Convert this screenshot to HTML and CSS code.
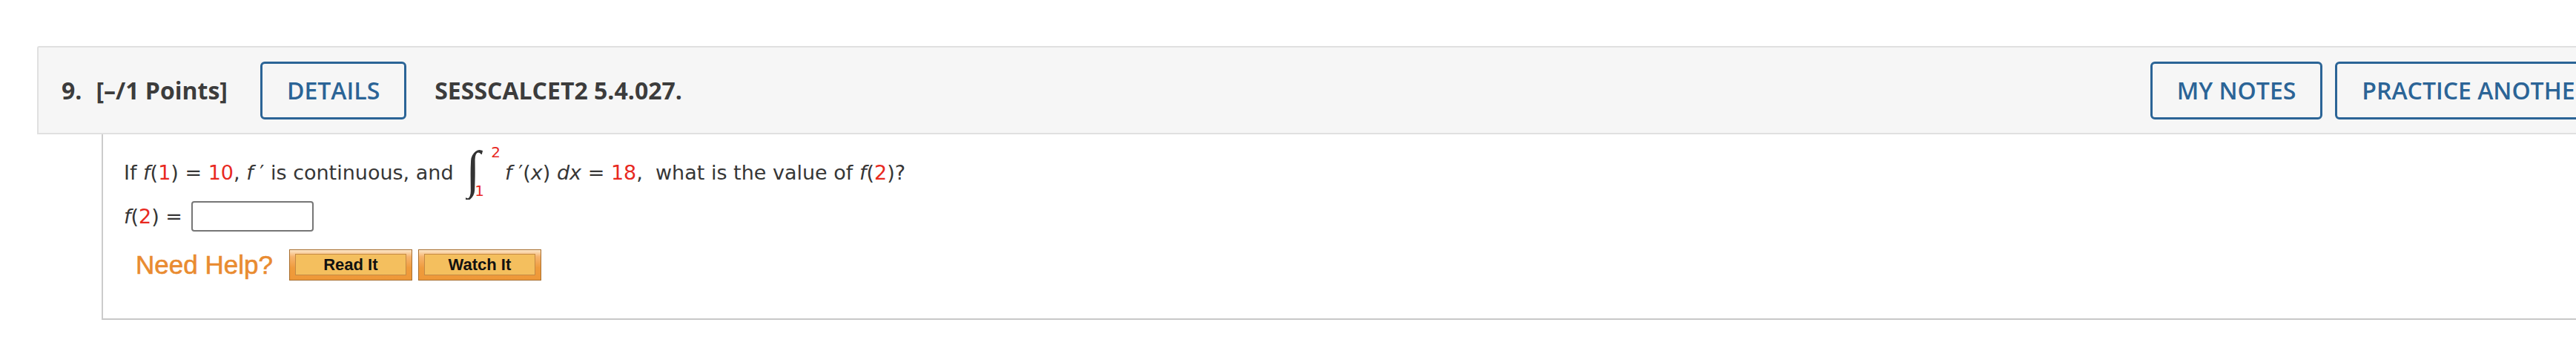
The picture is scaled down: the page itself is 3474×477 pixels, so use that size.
FILE: index.html
```html
<!DOCTYPE html>
<html lang="en">
<head>
<meta charset="utf-8">
<title>Question 9</title>
<link rel="stylesheet" href="styles.css">
</head>
<body>
<div class="page">
  <div class="question">
    <div class="q-header">
      <div class="q-left">
        <span class="q-num">9.</span>
        <span class="q-points">[–/1 Points]</span>
        <button class="btn-outline btn-details">DETAILS</button>
        <span class="q-code">SESSCALCET2 5.4.027.</span>
      </div>
      <div class="q-right">
        <button class="btn-outline">MY NOTES</button>
        <button class="btn-outline">PRACTICE ANOTHER</button>
      </div>
    </div>
    <div class="q-body">
      <p class="line1">If <i>f</i>(<span class="red">1</span>) = <span class="red">10</span>, <i>f</i> ′ is continuous, and <span class="int"><span class="int-in"><span class="int-sign">∫</span><span class="red lim-up">2</span><span class="red lim-lo">1</span></span></span><i>f</i> ′(<i>x</i>) <i>dx</i> = <span class="red">18</span>,&nbsp; what is the value of <i>f</i>(<span class="red">2</span>)?</p>
      <div class="line2">
        <span class="ans-label"><i>f</i>(<span class="red">2</span>) =</span>
        <input class="ans-input" type="text" aria-label="f(2)">
      </div>
      <div class="help-row">
        <span class="need-help">Need Help?</span>
        <button class="help-btn"><span class="help-inner">Read It</span></button>
        <button class="help-btn"><span class="help-inner">Watch It</span></button>
      </div>
    </div>
  </div>
</div>
</body>
</html>
```
FILE: styles.css
```css
html, body {
  margin: 0;
  padding: 0;
  background: #ffffff;
  overflow: hidden;
}

.page {
  padding: 62px 0 0 50px;
}

.question {
  width: 3512px;
}

.q-header {
  display: flex;
  align-items: center;
  justify-content: space-between;
  box-sizing: border-box;
  height: 119px;
  padding: 0 31px;
  background: #f6f6f6;
  border: 2px solid #e0e0e0;
  border-radius: 3px 3px 0 0;
  font-family: "Open Sans", "Liberation Sans", sans-serif;
  color: #3c3c3c;
}

.q-left, .q-right {
  display: flex;
  align-items: center;
}

.q-right {
  gap: 17px;
}

.q-num, .q-points, .q-code {
  font-size: 32px;
  font-weight: 700;
}

.q-num {
  margin-right: 19px;
}

.q-points {
  margin-right: 44px;
}

.btn-details {
  margin-right: 38px;
}

.btn-outline {
  box-sizing: border-box;
  height: 78px;
  padding: 0 33px;
  border: 3px solid #2b6496;
  border-radius: 6px;
  background: transparent;
  color: #2b6496;
  font-family: "Open Sans", "Liberation Sans", sans-serif;
  font-size: 32px;
  font-weight: 600;
  white-space: nowrap;
}

.q-body {
  margin-left: 87px;
  border-left: 2px solid #cccccc;
  border-bottom: 2px solid #c8c8c8;
  padding: 10px 0 51px 28px;
  font-family: "DejaVu Sans", Verdana, sans-serif;
  font-size: 27px;
  color: #363636;
}

.red {
  color: #e8291f;
}

.line1 {
  margin: 0;
  white-space: nowrap;
}

.int {
  display: inline-block;
  overflow: hidden;
  height: 78px;
  vertical-align: -27px;
  margin: 0 6px 0 8px;
}

.int-in {
  display: grid;
  grid-template-columns: auto auto;
  grid-template-rows: 1fr 1fr;
  height: 78px;
}

.int-sign {
  grid-row: 1 / 3;
  grid-column: 1;
  font-family: "Liberation Serif", serif;
  font-style: italic;
  font-size: 70px;
  line-height: 76px;
  color: #333333;
}

.lim-up {
  grid-row: 1;
  grid-column: 2;
  align-self: start;
  font-size: 20px;
  line-height: 20px;
  margin: 4px 0 0 15px;
}

.lim-lo {
  grid-row: 2;
  grid-column: 2;
  align-self: end;
  font-size: 20px;
  line-height: 24px;
  margin: 0 0 0 -7px;
}

.line2 {
  display: flex;
  align-items: center;
  margin-top: 2px;
}

.ans-input {
  box-sizing: border-box;
  width: 165px;
  height: 41px;
  margin: 0 0 0 12px;
  border: 2px solid #767676;
  border-radius: 4px;
  background: #ffffff;
}

.help-row {
  display: flex;
  align-items: center;
  margin: 24px 0 0 16px;
}

.need-help {
  font-family: "Liberation Sans", Arial, sans-serif;
  font-size: 35px;
  color: #e98b30;
  -webkit-text-stroke: 0.6px #e98b30;
  margin-right: 22px;
}

.help-btn {
  box-sizing: border-box;
  width: 166px;
  height: 42px;
  padding: 5px 7px 6px;
  margin-right: 8px;
  border: 1px solid #a86f30;
  border-radius: 0;
  background: linear-gradient(#fce6c8 0%, #f6b46e 22%, #ef9b3c 60%, #ee9838 100%);
  cursor: pointer;
}

.help-inner {
  display: flex;
  align-items: center;
  justify-content: center;
  box-sizing: border-box;
  height: 29px;
  border: 1px solid #c48a44;
  background: #f4bf5e;
  font-family: "Liberation Sans", Arial, sans-serif;
  font-size: 22px;
  font-weight: 700;
  color: #111111;
}
```
